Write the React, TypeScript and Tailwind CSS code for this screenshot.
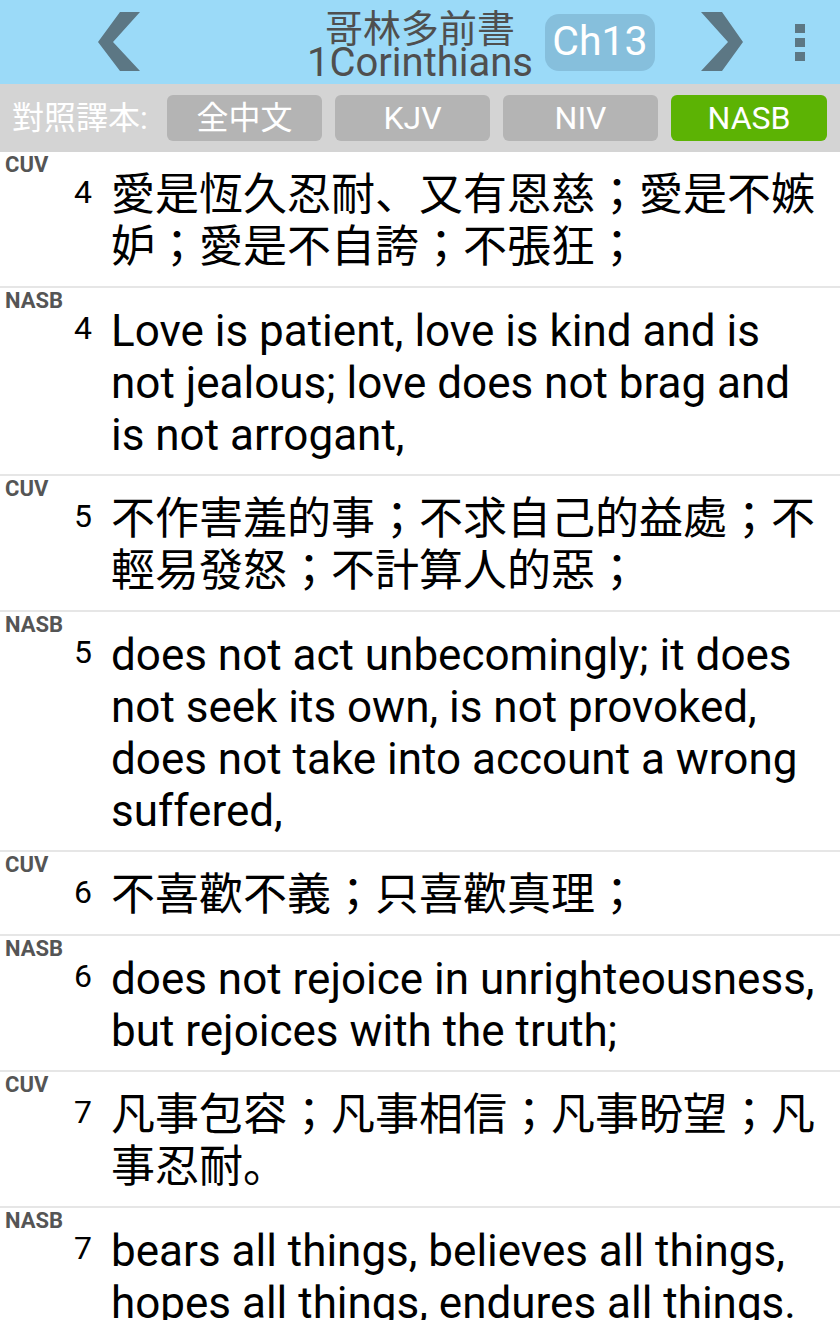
import React from 'react';

type Verse = { version: string; num: number; text: string };

const verses: Verse[] = [
  { version: 'CUV', num: 4, text: '愛是恆久忍耐、又有恩慈；愛是不嫉妒；愛是不自誇；不張狂；' },
  { version: 'NASB', num: 4, text: 'Love is patient, love is kind and is not jealous; love does not brag and is not arrogant,' },
  { version: 'CUV', num: 5, text: '不作害羞的事；不求自己的益處；不輕易發怒；不計算人的惡；' },
  {
    version: 'NASB',
    num: 5,
    text: 'does not act unbecomingly; it does not seek its own, is not provoked, does not take into account a wrong suffered,',
  },
  { version: 'CUV', num: 6, text: '不喜歡不義；只喜歡真理；' },
  { version: 'NASB', num: 6, text: 'does not rejoice in unrighteousness, but rejoices with the truth;' },
  { version: 'CUV', num: 7, text: '凡事包容；凡事相信；凡事盼望；凡事忍耐。' },
  { version: 'NASB', num: 7, text: 'bears all things, believes all things, hopes all things, endures all things.' },
];

const translations = ['全中文', 'KJV', 'NIV', 'NASB'];

function ChevronLeft() {
  return (
    <svg width="46" height="60" viewBox="0 0 46 60" className="shrink-0">
      <polygon points="23,0 43,0 16,30 43,59 23,59 1,30" fill="#5c7784" />
    </svg>
  );
}

function ChevronRight() {
  return (
    <svg width="46" height="60" viewBox="0 0 46 60" className="shrink-0">
      <polygon points="1,0 22,0 43,30 22,59 1,59 28,30" fill="#5c7784" />
    </svg>
  );
}

function MoreDots() {
  return (
    <div className="flex flex-col gap-[5px]">
      <div className="h-[9px] w-[10px] bg-[#5c7784]" />
      <div className="h-[9px] w-[10px] bg-[#5c7784]" />
      <div className="h-[9px] w-[10px] bg-[#5c7784]" />
    </div>
  );
}

function VerseRow({ verse }: { verse: Verse }) {
  return (
    <div className="flex items-start border-b-2 border-[#e6e6e6] bg-white">
      <div className="w-[70px] shrink-0 pl-[5px] pt-[2px] text-[22px] font-bold leading-[22px] text-[#555555]">
        {verse.version}
      </div>
      <div className="w-[41px] shrink-0 pt-[24px] pl-[4px] text-[32px] leading-[32px] text-black">{verse.num}</div>
      <div className="min-w-0 flex-1 pt-[17px] pb-[13px] pr-[10px] text-[44px] leading-[52px] text-black">
        {verse.text}
      </div>
    </div>
  );
}

export default function App() {
  return (
    <div className="h-[1320px] w-[840px] overflow-hidden bg-white font-['Roboto','Noto_Sans_CJK_JP',sans-serif]">
      <header className="flex h-[84px] items-center bg-[#9bdaf8]">
        <div className="ml-[97px]">
          <ChevronLeft />
        </div>
        <div className="ml-[157px] w-[240px] shrink-0 pt-[8px] text-center text-[#4f4f4f]">
          <div className="whitespace-nowrap text-[38px] leading-[34px]">哥林多前書</div>
          <div className="whitespace-nowrap text-[40px] leading-[34px]">1Corinthians</div>
        </div>
        <div className="ml-[5px] flex h-[57px] w-[110px] shrink-0 items-center justify-center rounded-[14px] bg-[#86bfdc] text-[41px] text-white">
          Ch13
        </div>
        <div className="ml-[45px]">
          <ChevronRight />
        </div>
        <div className="ml-[49px]">
          <MoreDots />
        </div>
      </header>

      <div className="flex h-[68px] items-center bg-[#d4d4d4] pl-[12px]">
        <div className="w-[155px] shrink-0 whitespace-nowrap text-[32px] text-white">對照譯本:</div>
        <div className="flex gap-[13px]">
          {translations.map((t) => (
            <div
              key={t}
              className={
                t === 'NASB'
                  ? 'flex h-[46px] w-[156px] items-center justify-center rounded-[6px] bg-[#5cb304] text-[32px] text-white'
                  : 'flex h-[46px] w-[155px] items-center justify-center rounded-[6px] bg-[#b4b4b4] text-[32px] text-white'
              }
            >
              {t}
            </div>
          ))}
        </div>
      </div>

      <div>
        {verses.map((v, i) => (
          <VerseRow key={i} verse={v} />
        ))}
      </div>
    </div>
  );
}
